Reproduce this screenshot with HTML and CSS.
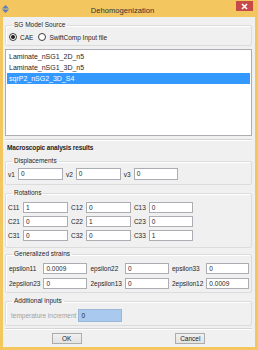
FILE: index.html
```html
<!DOCTYPE html>
<html>
<head>
<meta charset="utf-8">
<link rel="stylesheet" href="styles.css">
</head>
<body>
<div class="window">
  <div class="titlebar">
    <svg class="app-icon" width="7" height="8" viewBox="0 0 7 8"><polygon points="3.5,0 7,3.4 0,3.4" fill="#5b7fc0"/><polygon points="0,4.6 7,4.6 3.5,8" fill="#5b7fc0"/></svg>
    <div class="title">Dehomogenization</div>
    <div class="close"><svg width="7" height="7" viewBox="0 0 7 7"><path d="M1 1L6 6M6 1L1 6" stroke="#fff" stroke-width="1.6"/></svg></div>
  </div>
  <div class="content">
    <fieldset class="group g-source">
      <legend>SG Model Source</legend>
      <div class="radios">
        <span class="radio"><span class="dot checked"></span>CAE</span>
        <span class="radio"><span class="dot"></span>SwiftComp Input file</span>
      </div>
    </fieldset>
    <ul class="list">
      <li>Laminate_nSG1_2D_n5</li>
      <li>Laminate_nSG1_3D_n5</li>
      <li class="selected">sqrP2_nSG2_3D_S4</li>
    </ul>
    <div class="sep"></div>
    <div class="heading">Macroscopic analysis results</div>
    <fieldset class="group g-disp">
      <legend>Displacements</legend>
      <div class="grid g3">
        <span class="lbl">v1</span><span class="inp">0</span>
        <span class="lbl">v2</span><span class="inp">0</span>
        <span class="lbl">v3</span><span class="inp">0</span>
      </div>
    </fieldset>
    <fieldset class="group g-rot">
      <legend>Rotations</legend>
      <div class="grid g3 rows">
        <span class="lbl">C11</span><span class="inp">1</span>
        <span class="lbl">C12</span><span class="inp">0</span>
        <span class="lbl">C13</span><span class="inp">0</span>
        <span class="lbl">C21</span><span class="inp">0</span>
        <span class="lbl">C22</span><span class="inp">1</span>
        <span class="lbl">C23</span><span class="inp">0</span>
        <span class="lbl">C31</span><span class="inp">0</span>
        <span class="lbl">C32</span><span class="inp">0</span>
        <span class="lbl">C33</span><span class="inp">1</span>
      </div>
    </fieldset>
    <fieldset class="group g-strain">
      <legend>Generalized strains</legend>
      <div class="grid g3 rows strains">
        <span class="lbl">epsilon11</span><span class="inp">0.0009</span>
        <span class="lbl">epsilon22</span><span class="inp">0</span>
        <span class="lbl">epsilon33</span><span class="inp">0</span>
        <span class="lbl">2epsilon23</span><span class="inp">0</span>
        <span class="lbl">2epsilon13</span><span class="inp">0</span>
        <span class="lbl">2epsilon12</span><span class="inp">0.0009</span>
      </div>
    </fieldset>
    <fieldset class="group g-add">
      <legend>Additional inputs</legend>
      <div class="add-row">
        <span class="lbl disabled">temperature increment</span><span class="inp temp">0</span>
      </div>
    </fieldset>
    <div class="sep sep2"></div>
    <div class="buttons">
      <div class="btn-cell"><span class="btn">OK</span></div>
      <div class="btn-cell"><span class="btn">Cancel</span></div>
    </div>
  </div>
</div>
</body>
</html>
```
FILE: styles.css
```css
html, body {
  margin: 0;
  padding: 0;
  background: #f3c65f;
}
body {
  font-family: "Liberation Sans", Arial, sans-serif;
  font-size: 6.5px;
  color: #1e1e1e;
}
.window {
  width: 258px;
  height: 350px;
  background: #f3c65f;
  display: flex;
  flex-direction: column;
}
.titlebar {
  height: 17px;
  display: flex;
  align-items: flex-start;
}
.app-icon {
  margin: 5px 0 0 2px;
  flex: none;
}
.title {
  flex: 1;
  text-align: center;
  font-size: 7.6px;
  line-height: 8px;
  margin-top: 7px;
  color: #333;
}
.close {
  width: 17px;
  height: 10px;
  margin: 1px 5px 0 0;
  background: #c74a48;
  display: flex;
  align-items: center;
  justify-content: center;
}
.close svg { display: block; }
.content {
  margin: 0 3px;
  height: 330px;
  background: #f0f0f0;
  padding: 0 3px 0 2px;
  box-sizing: border-box;
  display: flex;
  flex-direction: column;
}
.group {
  margin: 0;
  padding: 0 0 0 2px;
  border: 1px solid #dcdcdc;
  border-radius: 2px;
  min-width: 0;
  box-shadow: inset 1px 1px 0 #fff;
}
.group legend {
  padding: 0 2px;
  margin-left: 4px;
  line-height: 10px;
  color: #1e1e1e;
}
.g-source { margin-top: 3px; padding-top: 2px; padding-bottom: 3px; }
.radios {
  display: flex;
  align-items: center;
  height: 10px;
  gap: 5px;
  padding-left: 1px;
}
.radio {
  display: flex;
  align-items: center;
  gap: 3px;
}
.dot {
  width: 6px;
  height: 6px;
  border: 1px solid #3c3c3c;
  border-radius: 50%;
  background: #fff;
  box-sizing: content-box;
  display: flex;
  align-items: center;
  justify-content: center;
}
.dot.checked::after {
  content: "";
  width: 4px;
  height: 4px;
  border-radius: 50%;
  background: #1e1e1e;
}
.list {
  list-style: none;
  margin: 3px 0 0 0;
  padding: 1px 1px;
  height: 87px;
  box-sizing: border-box;
  background: #fff;
  border: 1px solid #abadb3;
  font-size: 7px;
}
.list li {
  height: 11px;
  line-height: 11px;
  padding-left: 2px;
}
.list li.selected {
  background: #3399ff;
  color: #fff;
}
.sep {
  margin-top: 3px;
  height: 1px;
  border-top: 1px solid #d4d4d4;
  background: #fff;
}
.heading {
  margin-top: 2px;
  line-height: 10px;
  font-weight: bold;
  padding-left: 2px;
  letter-spacing: -0.15px;
}
.grid {
  display: grid;
  grid-template-columns: auto 45px auto 45px auto 44px;
  column-gap: 3px;
  row-gap: 3px;
  justify-content: start;
  align-items: center;
}
.grid.strains {
  grid-template-columns: auto 44px auto 44px auto 43px;
  row-gap: 4px;
  padding-left: 1px;
}
.lbl { white-space: nowrap; }
.inp {
  height: 11px;
  box-sizing: border-box;
  border: 1px solid #abadb3;
  background: #fff;
  line-height: 9px;
  padding-left: 2px;
  white-space: nowrap;
  overflow: hidden;
}
.g-disp { margin-top: 3px; padding-top: 2px; padding-bottom: 4px; }
.g-disp .inp { height: 12px; line-height: 10px; }
.g-rot { margin-top: 3px; padding-top: 4px; padding-bottom: 6px; }
.g-strain { margin-top: 1px; padding-top: 4px; padding-bottom: 3px; }
.g-add { margin-top: 3px; padding-top: 3px; padding-bottom: 3px; }
.add-row {
  display: flex;
  align-items: center;
  gap: 2px;
  padding-left: 3px;
}
.disabled { color: #a0a0a0; }
.inp.temp {
  width: 44px;
  height: 13px;
  line-height: 11px;
  background: #a9c9ee;
  border-color: #9ab7da;
}
.sep2 { margin-top: 2px; }
.buttons {
  margin-top: 3px;
  display: grid;
  grid-template-columns: 1fr 1fr;
}
.btn-cell {
  display: flex;
  justify-content: center;
}
.btn {
  width: 30px;
  height: 11px;
  box-sizing: border-box;
  border: 1px solid #acacac;
  background: linear-gradient(#f0f0f0, #e3e3e3);
  text-align: center;
  line-height: 9px;
}
```
